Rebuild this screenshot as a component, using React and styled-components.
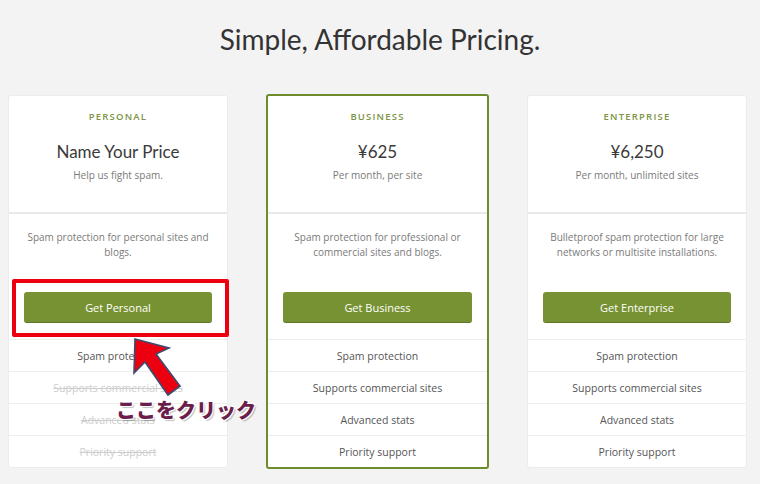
import styled, { createGlobalStyle } from "styled-components";

const GlobalStyle = createGlobalStyle`
  html, body {
    margin: 0;
    padding: 0;
    background: #f3f3f3;
  }
  * {
    box-sizing: border-box;
  }
`;

const Page = styled.div`
  position: relative;
  width: 760px;
  height: 484px;
  overflow: hidden;
  background: #f3f3f3;
  font-family: "Open Sans", "Liberation Sans", sans-serif;
`;

const Title = styled.h1`
  margin: 0;
  padding-top: 22px;
  height: 94px;
  text-align: center;
  font-family: "Lato", "Open Sans", sans-serif;
  font-weight: 400;
  font-size: 28px;
  line-height: 34px;
  color: #333;
`;

const Cards = styled.div`
  display: flex;
  align-items: center;
  gap: 38px;
  padding-left: 8px;
`;

const Card = styled.div`
  width: ${(p) => (p.$featured ? "223px" : "220px")};
  background: #fff;
  border: ${(p) => (p.$featured ? "2px solid #6f8c2c" : "1px solid #ececec")};
  border-radius: 3px;
  display: flex;
  flex-direction: column;
`;

const Head = styled.div`
  display: flex;
  flex-direction: column;
  align-items: center;
  padding: 14px 10px 30px;
  border-bottom: 2px solid #e9e9e9;
`;

const Label = styled.div`
  font-size: 9.5px;
  line-height: 14px;
  letter-spacing: 1.2px;
  font-weight: 600;
  color: #7d9445;
  text-transform: uppercase;
`;

const Price = styled.div`
  margin-top: 16px;
  font-family: "Lato", "Open Sans", sans-serif;
  font-size: 17px;
  line-height: 24px;
  color: #3a3a3a;
`;

const Sub = styled.div`
  margin-top: 4px;
  font-size: 10px;
  line-height: 14px;
  color: #7a7a7a;
`;

const Body = styled.div`
  display: flex;
  flex-direction: column;
  align-items: center;
  padding: 16px 15px 16px;
`;

const Desc = styled.p`
  margin: 0;
  height: 30px;
  max-width: 186px;
  text-align: center;
  font-size: 10px;
  line-height: 15px;
  color: #7a7a7a;
`;

const Button = styled.button`
  margin-top: 32px;
  width: 100%;
  height: 31px;
  border: none;
  border-bottom: 1px solid #5f7624;
  border-radius: 3px;
  background: #779232;
  color: #fff;
  font-family: "Open Sans", "Liberation Sans", sans-serif;
  font-size: 11px;
  cursor: pointer;
`;

const Feature = styled.div`
  height: 32px;
  display: flex;
  align-items: center;
  justify-content: center;
  border-top: 1px solid #eeeeee;
  font-size: 10.5px;
  color: ${(p) => (p.$off ? "#cdcdcd" : "#555")};
  text-decoration: ${(p) => (p.$off ? "line-through" : "none")};
`;

const Highlight = styled.div`
  position: absolute;
  left: 12px;
  top: 279px;
  width: 217px;
  height: 58px;
  border: 4px solid #ec0010;
  border-radius: 2px;
`;

const Arrow = styled.svg`
  position: absolute;
  left: 0;
  top: 0;
  pointer-events: none;
`;

const Note = styled.div`
  position: absolute;
  left: 116px;
  top: 396px;
  font-family: "Noto Sans CJK JP", sans-serif;
  font-weight: 900;
  font-size: 20px;
  line-height: 28px;
  color: #6a1e4c;
  text-shadow: 1px 1px 0 #fff, -1px -1px 0 #fff, 1px -1px 0 #fff,
    -1px 1px 0 #fff, 2px 2px 1px rgba(0, 0, 0, 0.25);
`;

const plans = [
  {
    name: "Personal",
    price: "Name Your Price",
    sub: "Help us fight spam.",
    desc: "Spam protection for personal sites and blogs.",
    button: "Get Personal",
    off: [false, true, true, true],
  },
  {
    name: "Business",
    price: "¥625",
    sub: "Per month, per site",
    desc: "Spam protection for professional or commercial sites and blogs.",
    button: "Get Business",
    featured: true,
    off: [false, false, false, false],
  },
  {
    name: "Enterprise",
    price: "¥6,250",
    sub: "Per month, unlimited sites",
    desc: "Bulletproof spam protection for large networks or multisite installations.",
    button: "Get Enterprise",
    off: [false, false, false, false],
  },
];

const features = [
  "Spam protection",
  "Supports commercial sites",
  "Advanced stats",
  "Priority support",
];

function App() {
  return (
    <Page>
      <GlobalStyle />
      <Title>Simple, Affordable Pricing.</Title>
      <Cards>
        {plans.map((plan) => (
          <Card key={plan.name} $featured={plan.featured}>
            <Head>
              <Label>{plan.name}</Label>
              <Price>{plan.price}</Price>
              <Sub>{plan.sub}</Sub>
            </Head>
            <Body>
              <Desc>{plan.desc}</Desc>
              <Button>{plan.button}</Button>
            </Body>
            {features.map((f, i) => (
              <Feature key={f} $off={plan.off[i]}>
                {f}
              </Feature>
            ))}
          </Card>
        ))}
      </Cards>
      <Highlight />
      <Arrow width="760" height="484" viewBox="0 0 760 484">
        <polygon
          points="135,339 134,373 145,362 168,395 180,386 156,354 169,348"
          fill="#ec0010"
          stroke="#3e4a6e"
          strokeWidth="1.6"
          strokeLinejoin="miter"
        />
      </Arrow>
      <Note>ここをクリック</Note>
    </Page>
  );
}

export default App;
